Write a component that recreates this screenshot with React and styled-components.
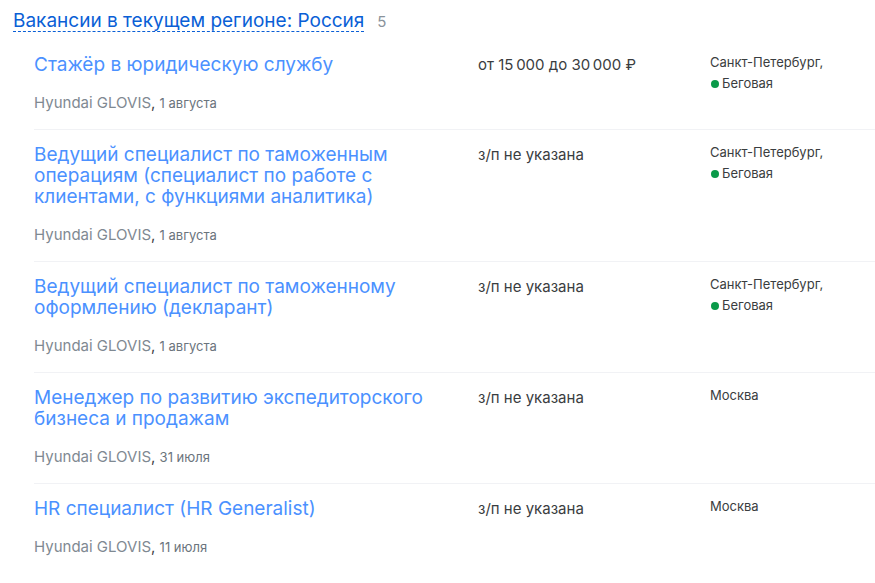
import React from 'react'
import styled, { createGlobalStyle } from 'styled-components'

const GlobalStyle = createGlobalStyle`
  body {
    margin: 0;
    background: #fff;
    color: #3a3d40;
    font-family: Inter, "Liberation Sans", Arial, sans-serif;
  }
`

const Page = styled.main`
  padding: 10px 0 0 13px;
`

const Header = styled.header`
  display: flex;
  align-items: baseline;
  gap: 13px;
  margin-bottom: 8px;
`

const RegionLink = styled.a`
  color: #0a5fd6;
  font-size: 19px;
  line-height: 21px;
  text-decoration: none;
  border-bottom: 1px dashed #0a5fd6;
`

const Count = styled.span`
  color: #8a939b;
  font-size: 15px;
  line-height: 20px;
`

const List = styled.ul`
  list-style: none;
  margin: 0;
  padding: 0 0 0 21px;
`

const Row = styled.li`
  display: grid;
  grid-template-columns: 444fr 232fr 165fr;
  padding: 14px 0 16px;
  border-bottom: 1px solid #f1f2f5;

  &:last-child {
    border-bottom: 0;
  }
`

const Title = styled.h3`
  margin: 0 0 18px;
  font-size: 19px;
  font-weight: 400;
  line-height: 21px;
`

const TitleLink = styled.a`
  color: #4b91ff;
  text-decoration: none;
`

const Employer = styled.p`
  margin: 0;
  font-size: 15px;
  line-height: 20px;
`

const EmployerLink = styled.a`
  color: #7f8992;
  text-decoration: none;
`

const PostedAt = styled.span`
  color: #6b747d;
  font-size: 13px;
`

const Salary = styled.div`
  font-size: 15px;
  line-height: 22px;
`

const Address = styled.div`
  font-size: 13px;
  line-height: 21px;
  margin-top: -2px;
`

const Metro = styled.div`
  display: flex;
  align-items: center;
  gap: 3px;
`

const MetroDot = styled.span`
  width: 8px;
  height: 8px;
  border-radius: 50%;
  background: #0a9a49;
  margin-left: 1px;
`

const vacancies = [
  {
    title: ['Стажёр в юридическую службу'],
    salary: 'от 15\u202f000 до 30\u202f000 ₽',
    date: '1 августа',
    city: 'Санкт-Петербург',
    metro: 'Беговая',
  },
  {
    title: ['Ведущий специалист по таможенным', 'операциям (специалист по работе с', 'клиентами, с функциями аналитика)'],
    salary: 'з/п не указана',
    date: '1 августа',
    city: 'Санкт-Петербург',
    metro: 'Беговая',
  },
  {
    title: ['Ведущий специалист по таможенному', 'оформлению (декларант)'],
    salary: 'з/п не указана',
    date: '1 августа',
    city: 'Санкт-Петербург',
    metro: 'Беговая',
  },
  {
    title: ['Менеджер по развитию экспедиторского', 'бизнеса и продажам'],
    salary: 'з/п не указана',
    date: '31 июля',
    city: 'Москва',
  },
  {
    title: ['HR специалист (HR Generalist)'],
    salary: 'з/п не указана',
    date: '11 июля',
    city: 'Москва',
  },
]

const VacancyRow = ({ vacancy }) => {
  return (
    <Row>
      <div>
        <Title>
          <TitleLink href="#">
            {vacancy.title.map((line, i) => (
              <React.Fragment key={line}>
                {i > 0 && <br />}
                {line}
              </React.Fragment>
            ))}
          </TitleLink>
        </Title>
        <Employer>
          <EmployerLink href="#">Hyundai GLOVIS</EmployerLink>, <PostedAt>{vacancy.date}</PostedAt>
        </Employer>
      </div>
      <Salary>{vacancy.salary}</Salary>
      <Address>
        {vacancy.city}
        {vacancy.metro && ','}
        {vacancy.metro && (
          <Metro>
            <MetroDot />
            {vacancy.metro}
          </Metro>
        )}
      </Address>
    </Row>
  )
}

const App = () => {
  return (
    <>
      <GlobalStyle />
      <Page>
        <Header>
          <RegionLink href="#">Вакансии в текущем регионе: Россия</RegionLink>
          <Count>5</Count>
        </Header>
        <List>
          {vacancies.map((vacancy) => (
            <VacancyRow key={vacancy.title[0]} vacancy={vacancy} />
          ))}
        </List>
      </Page>
    </>
  )
}

export default App
